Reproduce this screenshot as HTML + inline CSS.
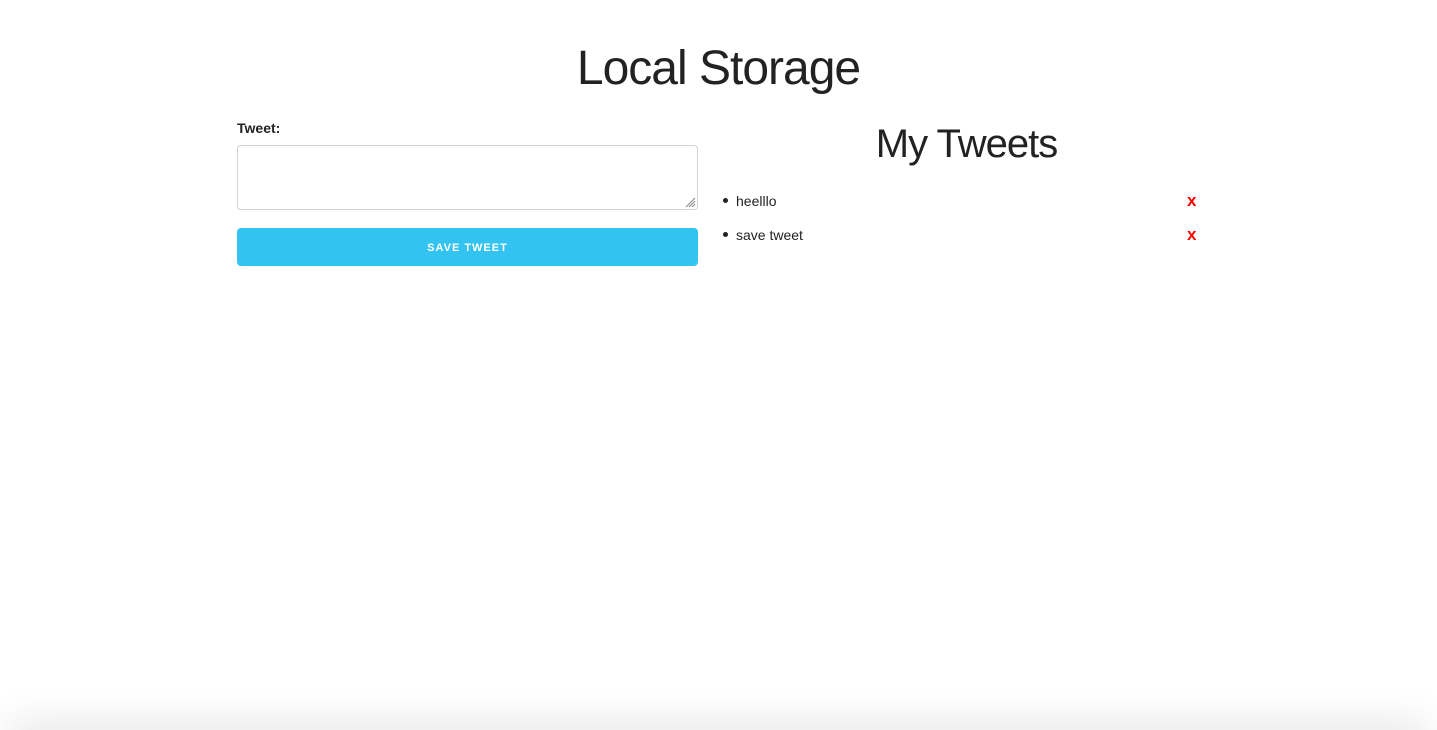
<!DOCTYPE html>
<html style="overflow:hidden;height:730px"><head><style>
body{margin:0;width:1437px;height:730px;background:#fff;font-family:"Liberation Sans",sans-serif;color:#222;position:relative;overflow:hidden}
h1{position:absolute;top:41px;left:0;width:1437px;text-align:center;margin:0;font-weight:300;font-size:48px;letter-spacing:-1px;color:#222}
.lbl{position:absolute;left:237px;top:120px;font-weight:bold;font-size:14px}
.ta{position:absolute;left:237px;top:145px;width:459px;height:63px;border:1px solid #d1d1d1;border-radius:4px}
.btn{position:absolute;left:237px;top:228px;width:461px;height:38px;background:#33c3f0;border-radius:4px;color:#fff;font-weight:bold;font-size:11px;letter-spacing:1px;text-align:center;line-height:40px}
h2{position:absolute;top:122px;left:718px;width:497px;text-align:center;margin:0;font-weight:300;font-size:40px;letter-spacing:-1px}
.li{position:absolute;left:723px;font-size:14px}
.li:before{content:"";display:inline-block;width:5px;height:5px;border-radius:50%;background:#222;margin-right:8px;vertical-align:middle;position:relative;top:-2px}
.x{position:absolute;left:1187px;color:#f00;font-weight:bold;font-size:17px}
.sh{position:absolute;left:20px;right:20px;top:730px;height:30px;box-shadow:0 0 40px 10px rgba(0,0,0,.09)}
</style></head><body>
<h1>Local Storage</h1>
<div class="lbl">Tweet:</div>
<div class="ta"><svg style="position:absolute;right:1px;bottom:1px" width="12" height="12"><path d="M11 2L2 11M11 5L5 11M11 8L8 11" stroke="#888" stroke-width="1"/></svg></div>
<div class="btn">SAVE TWEET</div>
<h2>My Tweets</h2>
<div class="li" style="top:193px">heelllo</div><div class="x" style="top:191px">x</div>
<div class="li" style="top:227px">save tweet</div><div class="x" style="top:225px">x</div>
<div class="sh"></div>
</body></html>
